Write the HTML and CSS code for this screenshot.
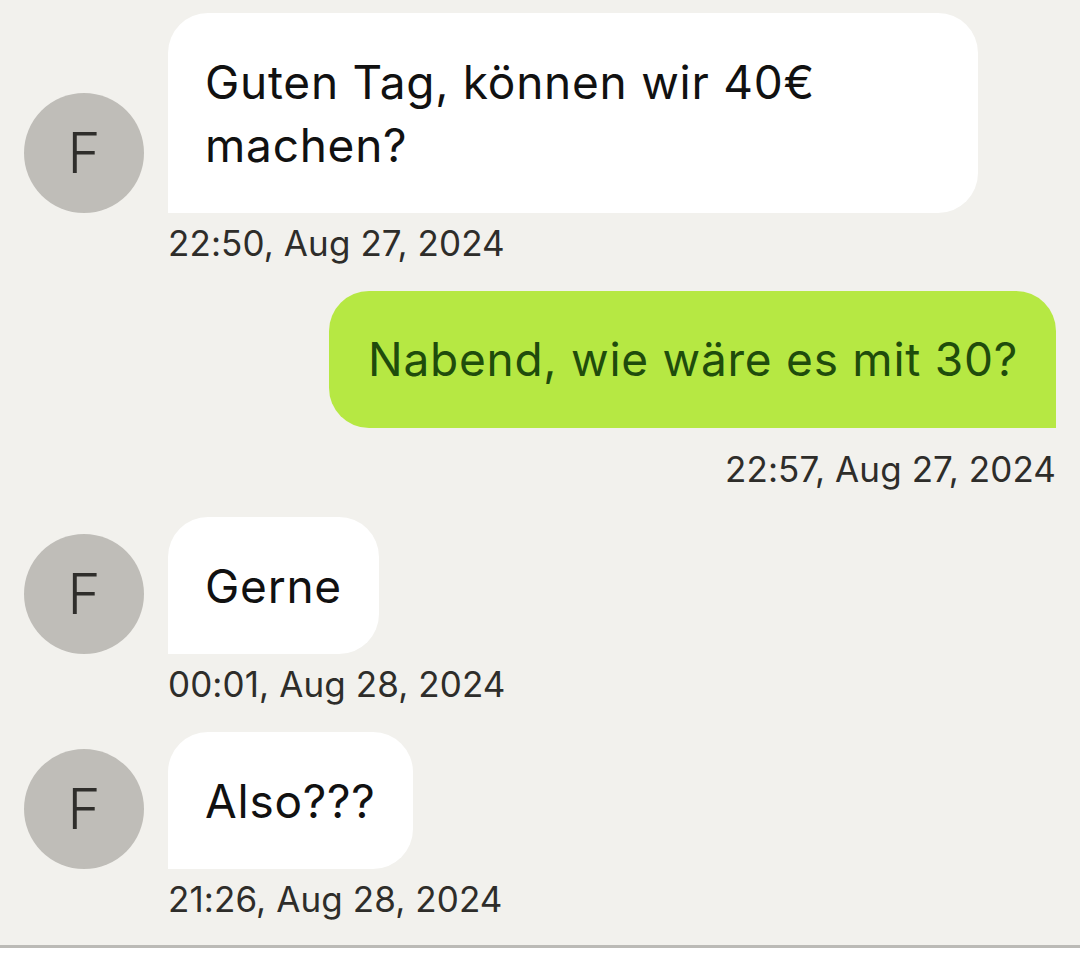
FILE: index.html
```html
<!DOCTYPE html>
<html lang="de">
<head>
    <meta charset="UTF-8">
    <meta name="viewport" content="width=device-width, initial-scale=1.0">
    <title>Nachrichten</title>
    <link rel="stylesheet" href="styles.css">
</head>
<body>
    <main class="chat">
        <div class="msg in">
            <div class="row">
                <div class="avatar">F</div>
                <div class="bubble">Guten Tag, können wir 40€ machen?</div>
            </div>
            <p class="time">22:50, Aug 27, 2024</p>
        </div>

        <div class="msg out">
            <div class="row">
                <div class="bubble">Nabend, wie wäre es mit 30?</div>
            </div>
            <p class="time">22:57, Aug 27, 2024</p>
        </div>

        <div class="msg in">
            <div class="row">
                <div class="avatar">F</div>
                <div class="bubble">Gerne</div>
            </div>
            <p class="time">00:01, Aug 28, 2024</p>
        </div>

        <div class="msg in">
            <div class="row">
                <div class="avatar">F</div>
                <div class="bubble">Also???</div>
            </div>
            <p class="time">21:26, Aug 28, 2024</p>
        </div>
    </main>
    <div class="composer"></div>
</body>
</html>
```

FILE: styles.css
```css
*{
    margin: 0;
    padding: 0;
    box-sizing: border-box;
}

body{
    background-color: #f2f1ed;
    font-family: "Inter", "Liberation Sans", sans-serif;
    color: #111;
    height: 962px;
    overflow: hidden;
    display: flex;
    flex-direction: column;
}

.chat{
    height: 945px;
    padding: 13px 24px 0;
    display: flex;
    flex-direction: column;
    gap: 28px;
}

.row{
    display: flex;
    align-items: flex-end;
    gap: 24px;
}

.avatar{
    width: 120px;
    height: 120px;
    flex-shrink: 0;
    border-radius: 50%;
    background-color: #bfbdb8;
    color: #2f2e2b;
    font-size: 56px;
    font-weight: 300;
    display: flex;
    align-items: center;
    justify-content: center;
}

.bubble{
    max-width: 810px;
    padding: 38px 37px 36px;
    font-size: 46px;
    line-height: 63px;
    letter-spacing: 0.75px;
    background-color: #fff;
    border-radius: 40px 40px 40px 0;
}

.out .row{
    justify-content: flex-end;
}

.out .bubble{
    background-color: #b6e843;
    color: #1f4c0c;
    padding: 37px 38px 37px 39px;
    border-radius: 40px 40px 0 40px;
}

.time{
    margin-top: 10px;
    margin-left: 144px;
    font-size: 35px;
    line-height: 40px;
    letter-spacing: 0.1px;
    color: #2e2d2a;
}

.out .time{
    margin-left: 0;
    margin-top: 21px;
    text-align: right;
}

.composer{
    flex: 1;
    background-color: #fff;
    border-top: 3px solid #bbbab6;
}
```
